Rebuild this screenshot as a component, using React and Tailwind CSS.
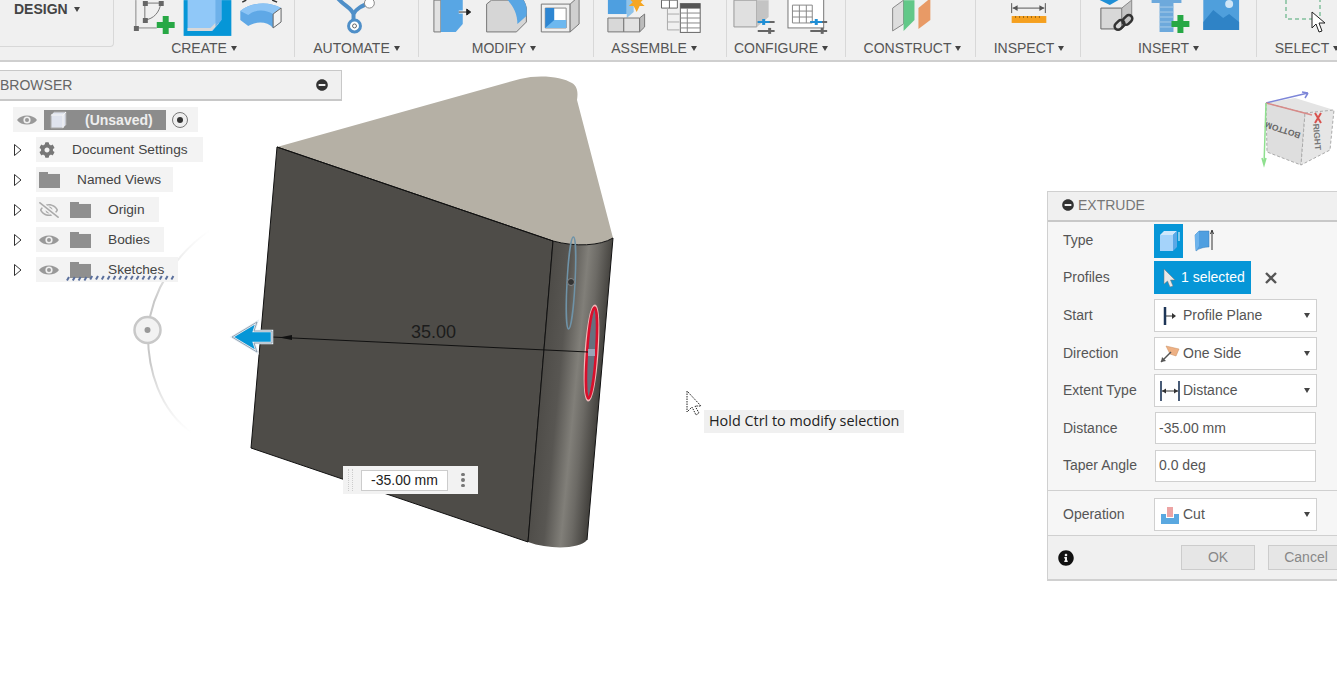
import React from 'react'
import { FaCog, FaInfoCircle, FaMinusCircle, FaRegEyeSlash } from 'react-icons/fa'

const Caret = () => (
  <svg width="6" height="5" viewBox="0 0 6 5" className="shrink-0">
    <path d="M0 0H6L3 5Z" fill="#444" />
  </svg>
)

const Group = ({ box, label, className, labelClass = '', children }) => (
  <div className={`flex h-[57px] shrink-0 flex-col border-r border-[#d8d8d8] ${className}`}>
    <svg className="h-[38px] w-full shrink-0" viewBox={box}>
      {children}
    </svg>
    <div className={`flex h-[19px] items-center justify-center gap-[4px] pt-[2px] text-[14px] text-[#555] ${labelClass}`}>
      {label}
      <Caret />
    </div>
  </div>
)

const Plus = ({ x, y }) => (
  <path d={`M${x - 3} ${y - 9}h6v6h6v6h-6v6h-6v-6h-6v-6h6z`} fill="#27a845" />
)

const Sliders = ({ x, y }) => (
  <g>
    <path d={`M${x} ${y}h17M${x} ${y + 9}h17`} stroke="#666" strokeWidth="2" />
    <path d={`M${x + 6} ${y - 3}v6`} stroke="#1f8fd6" strokeWidth="3" />
    <path d={`M${x + 12} ${y + 6}v6`} stroke="#666" strokeWidth="3" />
    <path d={`M${x} ${y}h12`} stroke="#1f8fd6" strokeWidth="2" />
  </g>
)

const Toolbar = () => (
  <div className="relative flex h-[62px] border-b-2 border-[#cfcfcf] bg-[#f0f0f0]">
    <div className="h-[47px] w-[114px] shrink-0 rounded-br-[4px] border-r border-b border-[#d8d8d8] pl-[14px]">
      <div className="flex h-[18px] items-center gap-[6px] text-[14px] font-bold text-[#444]">
        DESIGN
        <Caret />
      </div>
    </div>
    <Group box="114 0 181 38" label="CREATE" className="w-[181px]">
      <path d="M136 0V28H157" fill="none" stroke="#888" strokeWidth="1" />
      <path d="M145 3H161M145 3V20M145 20C154 19 160 12 161 3" fill="none" stroke="#777" strokeWidth="1" />
      <path d="M134 26h5v5h-5zM143 1h5v5h-5zM159 1h5v5h-5zM143 18h5v5h-5z" fill="#666" />
      <Plus x={166} y={25} />
      <rect x="184" y="0" width="48" height="36" fill="#0696d7" />
      <path d="M188 0H222V20L213 31H188Z" fill="#90c8f8" />
      <path d="M188 28H211L219 20V24L212 31H188Z" fill="#d8d8d8" />
      <path d="M216 0H222V20L216 27Z" fill="#6db1ea" />
      <path d="M241 11C252 2 270 1 282 8V22L274 28C268 21 257 21 249 26L241 20Z" fill="#5fa8e6" />
      <path d="M241 11C252 2 270 1 282 8L274 14C266 9 256 9 249 15Z" fill="#8cc4f5" />
      <path d="M274 14L282 8V22L274 28Z" fill="#f2f2f2" stroke="#666" />
      <path d="M243 2L247 0M273 0L278 2" stroke="#333" strokeWidth="1.5" />
    </Group>
    <Group box="295 0 124 38" label="AUTOMATE" className="w-[124px]">
      <path d="M338 -2C345 6 352 8 354 14V24M372 2C362 6 357 8 354 14" fill="none" stroke="#4f8fc8" strokeWidth="4" />
      <circle cx="355" cy="26" r="6" fill="#fff" stroke="#4f8fc8" strokeWidth="3" />
      <circle cx="355" cy="26" r="2" fill="none" stroke="#666" />
      <circle cx="370" cy="3" r="5" fill="#fff" stroke="#888" />
    </Group>
    <Group box="419 0 175 38" label="MODIFY" className="w-[175px]" labelClass="pr-[4px]">
      <path d="M434 0H441V32H434Z" fill="#e2e2e2" stroke="#777" />
      <path d="M441 0H463V24L456 32H441Z" fill="#58a6e4" />
      <path d="M459 12H470" stroke="#fff" strokeWidth="3" />
      <path d="M459 12H470M467 9L471 12L467 15Z" stroke="#222" fill="#222" />
      <path d="M487 4V32H517L527 22V8C526 4 525 2 524 0H492Z" fill="#d6d6d6" stroke="#777" />
      <path d="M508 0H524C527 4 528 9 527 16L518 24C518 14 514 6 508 0Z" fill="#58a6e4" />
      <path d="M542 4H571V32H542Z" fill="#f0f0f0" stroke="#777" />
      <path d="M571 4L580 -4V24L571 32Z" fill="#cfcfcf" stroke="#777" />
      <path d="M546 8H567V28H546Z" fill="#fff" stroke="#888" />
      <path d="M546 8H555V20H567V28H546Z" fill="#2e86d2" />
      <path d="M555 20H567V28H546Z" fill="#6db8ef" />
    </Group>
    <Group box="594 0 133 38" label="ASSEMBLE" className="w-[133px]" labelClass="pr-[12px]">
      <path d="M608 -2H627V14H608Z" fill="#4e9fe0" />
      <path d="M627 -2L634 -6V12L627 18Z" fill="#8fc3ea" />
      <path d="M608 18H624V32H608Z" fill="#d8d8d8" stroke="#777" />
      <path d="M624 18H640V32H624Z" fill="#e2e2e2" stroke="#777" />
      <path d="M640 32L645 27V14L640 18Z" fill="#bbb" stroke="#777" />
      <path d="M637 -6L639 -2L646 -3L641 2L645 6L640 6L637 12L634 6L629 6L633 2L628 -3L635 -2Z" fill="#f5a623" />
      <path d="M662 0H678V8H662Z" fill="#fff" stroke="#666" />
      <path d="M670 0V8" stroke="#666" />
      <path d="M668 8V30M668 14H680M668 22H680M668 30H680" stroke="#aaa" fill="none" />
      <rect x="681" y="3.5" width="20" height="29" fill="#fff" stroke="#666" />
      <rect x="681" y="3.5" width="20" height="5" fill="#555" />
      <path d="M681 13H701M681 18H701M681 23H701M681 28H701M688 8V32" stroke="#888" />
    </Group>
    <Group box="727 0 119 38" label="CONFIGURE" className="w-[119px]" labelClass="pr-[10px]">
      <path d="M734 0V27H757V0Z" fill="#e0e0e0" stroke="#999" />
      <path d="M757 0H769V17L757 27Z" fill="#c4c4c4" />
      <Sliders x={758} y={22} />
      <rect x="788.5" y="-2" width="36" height="30" fill="#fff" stroke="#777" />
      <path d="M793 5H813V23H793ZM793 11H813M793 17H813M800 5V23M807 5V23" fill="none" stroke="#888" />
      <Sliders x={811} y={22} />
    </Group>
    <Group box="846 0 130 38" label="CONSTRUCT" className="w-[130px]" labelClass="pl-[4px]">
      <path d="M893 8L904 0V24L893 31Z" fill="#ddd" stroke="#888" />
      <path d="M904 0H915V20L904 31Z" fill="#62c888" />
      <path d="M919 29V8L931 -2V20Z" fill="#e89a66" />
    </Group>
    <Group box="976 0 105 38" label="INSPECT" className="w-[105px]" labelClass="pl-[2px]">
      <path d="M1012 3V13M1046 3V13M1013 8H1045" stroke="#555" fill="none" />
      <path d="M1013 8L1018 5V11ZM1045 8L1040 5V11Z" fill="#555" />
      <rect x="1012" y="16" width="35" height="7" fill="#f5a01f" />
      <path d="M1016 16v2M1020 16v2M1024 16v2M1028 16v2M1032 16v2M1036 16v2M1040 16v2" stroke="#9a6510" />
    </Group>
    <Group box="1081 0 176 38" label="INSERT" className="w-[176px]">
      <path d="M1101 8H1122V29H1101Z" fill="#d8d8d8" stroke="#666" />
      <path d="M1122 8L1132 0V20L1122 29Z" fill="#c4c4c4" stroke="#888" />
      <path d="M1096 -2L1110 5L1122 -2Z" fill="#1f8fd6" />
      <g fill="none" stroke="#333" strokeWidth="2.5">
        <rect x="1114" y="22" width="11" height="7" rx="3.5" transform="rotate(-45 1119 25)" />
        <rect x="1122" y="17" width="11" height="7" rx="3.5" transform="rotate(-45 1127 20)" />
      </g>
      <path d="M1152 0H1182V3H1174V32H1160V3H1152Z" fill="#6da9dc" />
      <path d="M1160 7H1174M1160 12H1174M1160 17H1174M1160 22H1174M1160 27H1174" stroke="#a8cde9" />
      <Plus x={1181} y={24} />
      <rect x="1204" y="-2" width="36" height="32" fill="#4f9fdc" />
      <circle cx="1230" cy="4" r="4" fill="#cfe6f7" />
      <path d="M1204 22L1214 10L1224 18L1230 14L1240 22V30H1204Z" fill="#2f83c6" />
    </Group>
    <Group box="1257 0 100 38" label="SELECT" className="w-[100px] border-r-0">
      <path d="M1286 0V19H1320V0" fill="none" stroke="#4aa772" strokeDasharray="4 3" />
      <path d="M1312 12V28L1316 24L1319 32L1322 31L1319 23H1325Z" fill="#fff" stroke="#222" />
    </Group>
  </div>
)

const Eye = () => (
  <svg width="20" height="12" viewBox="0 0 20 12" className="shrink-0">
    <path d="M0 6C4 0 16 0 20 6C16 12 4 12 0 6Z" fill="#999" />
    <circle cx="10" cy="6" r="3.6" fill="#f0f0f0" />
    <circle cx="10" cy="6" r="2" fill="#999" />
  </svg>
)

const Folder = () => (
  <svg width="21" height="16" viewBox="0 0 21 16" className="shrink-0">
    <path d="M0 0H9V2H21V16H0Z" fill="#8f8f8f" />
    <path d="M9 1H21V2H9Z" fill="#f0f0f0" />
  </svg>
)

const Toggle = () => (
  <svg width="8" height="12" viewBox="0 0 8 12" className="ml-[14px] mr-[14px] shrink-0">
    <path d="M0.5 0.5L7 6L0.5 11.5Z" fill="#fff" stroke="#333" />
  </svg>
)

const TreeRow = ({ width, children }) => (
  <div className="flex h-[25px] items-center">
    <Toggle />
    <div className={`flex h-[25px] items-center bg-[#f3f3f3] text-[13.7px] text-[#444] ${width}`}>{children}</div>
  </div>
)

const Browser = () => (
  <div className="relative mt-[8px] w-[342px]">
    <div className="flex h-[31px] items-center justify-between border-t border-r border-b-2 border-[#c8c8c8] bg-[#f0f0f0] pr-[13px] text-[14px] text-[#666]">
      BROWSER
      <FaMinusCircle className="text-[12px] text-[#333]" />
    </div>
    <div className="mt-[6px] flex flex-col gap-[5px]">
      <div className="ml-[13px] flex h-[25px] w-[185px] items-center bg-[#f3f3f3]">
        <div className="ml-[4px]">
          <Eye />
        </div>
        <div className="ml-[7px] flex h-[20px] w-[122px] items-center bg-[#8c8c8c]">
          <svg width="18" height="18" viewBox="0 0 18 18" className="ml-[5px] shrink-0">
            <path d="M2 4L5 1H17V14L14 17H2Z" fill="#dfe3ee" stroke="#aaa" />
            <path d="M14 4V17M14 4H2M14 4L17 1" stroke="#f5f5f5" fill="none" />
          </svg>
          <span className="ml-[18px] pt-[2px] text-[14px] font-bold text-[#eee]">(Unsaved)</span>
        </div>
        <div className="ml-[6px] flex h-[16px] w-[16px] items-center justify-center rounded-full border border-[#777] bg-[#eee]">
          <div className="h-[6px] w-[6px] rounded-full bg-[#333]" />
        </div>
      </div>
      <TreeRow width="w-[167px]">
        <FaCog className="ml-[3px] text-[16px] text-[#777]" />
        <span className="ml-[17px] pt-[2px]">Document Settings</span>
      </TreeRow>
      <TreeRow width="w-[137px]">
        <div className="ml-[3px]">
          <Folder />
        </div>
        <span className="ml-[17px] pt-[2px]">Named Views</span>
      </TreeRow>
      <TreeRow width="w-[123px]">
        <FaRegEyeSlash className="ml-[3px] text-[20px] text-[#aaa]" />
        <div className="ml-[11px]">
          <Folder />
        </div>
        <span className="ml-[17px] pt-[2px]">Origin</span>
      </TreeRow>
      <TreeRow width="w-[128px]">
        <div className="ml-[3px]">
          <Eye />
        </div>
        <div className="ml-[11px]">
          <Folder />
        </div>
        <span className="ml-[17px] pt-[2px]">Bodies</span>
      </TreeRow>
      <TreeRow width="w-[142px]">
        <div className="ml-[3px]">
          <Eye />
        </div>
        <div className="ml-[11px]">
          <Folder />
        </div>
        <span className="ml-[17px] pt-[2px]">Sketches</span>
      </TreeRow>
    </div>
    <svg className="absolute left-[66px] top-[205px]" width="112" height="6" viewBox="0 0 112 6">
      {Array.from({ length: 19 }).map((_, i) => (
        <path key={i} d={`M${1 + i * 5.8} ${i < 4 ? 5.5 : 4.5}l2 -3.5`} stroke="#5a6f9c" strokeWidth="2" />
      ))}
    </svg>
  </div>
)

const Model = () => (
  <svg className="absolute inset-0" width="1337" height="691" viewBox="0 0 1337 691">
    <defs>
      <linearGradient id="side" gradientUnits="userSpaceOnUse" x1="550" y1="241" x2="613" y2="247">
        <stop offset="0" stopColor="#4c4a46" />
        <stop offset="0.35" stopColor="#585652" />
        <stop offset="0.62" stopColor="#817f79" />
        <stop offset="0.78" stopColor="#6c6a65" />
        <stop offset="1" stopColor="#45433f" />
      </linearGradient>
      <linearGradient id="arc" x1="0" y1="0" x2="0" y2="1">
        <stop offset="0" stopColor="#ddd" stopOpacity="0" />
        <stop offset="0.35" stopColor="#c8c8c8" />
        <stop offset="0.65" stopColor="#c8c8c8" />
        <stop offset="1" stopColor="#ddd" stopOpacity="0" />
      </linearGradient>
    </defs>
    <path d="M210 230C175 255 152 290 148 330C147 370 160 410 192 433" fill="none" stroke="url(#arc)" strokeWidth="2" />
    <circle cx="147.5" cy="330" r="13" fill="#f2f2f2" stroke="#c8c8c8" strokeWidth="2.5" />
    <circle cx="147.5" cy="330" r="3" fill="#999" />
    <path d="M277 147L520 79C540 74 562 77 572 83C578 87 578 93 577 100L613 238C600 246 575 247 553 241Z" fill="#b5b0a5" />
    <path d="M277 147L553 241L528 542L251 448Z" fill="#4e4c48" stroke="#111" strokeWidth="1" />
    <path d="M553 241C575 247 600 246 613 238L587 540C580 549 550 550 528 542Z" fill="url(#side)" />
    <path d="M277 147L553 241C575 247 600 246 613 238L587 540M553 241L528 542" fill="none" stroke="#111" strokeWidth="1" />
    <ellipse cx="571" cy="283" rx="4" ry="46" transform="rotate(3 571 283)" fill="none" stroke="#6f93a8" strokeWidth="1.5" />
    <circle cx="571" cy="282" r="3.5" fill="#333" stroke="#888" />
    <ellipse cx="591.5" cy="353" rx="5.5" ry="47" transform="rotate(4 591.5 353)" fill="#66707e" stroke="#f0b8b8" strokeWidth="3" />
    <ellipse cx="591.5" cy="353" rx="4.5" ry="45.5" transform="rotate(4 591.5 353)" fill="none" stroke="#d8102c" strokeWidth="2.5" />
    <rect x="588" y="349" width="7" height="7" fill="#9aa5b8" />
    <path d="M272 337L588 352" stroke="#111" strokeWidth="1" />
    <path d="M279 337.5L292 335V340Z" fill="#111" />
    <text x="411" y="338" fontSize="18" fill="#1c1c1c">35.00</text>
    <path d="M232 337L257 322L254 331H272V343H254L257 352Z" fill="#0696d7" stroke="#e8eef4" strokeWidth="2.5" />
    <path d="M232 337L257 322L254 331H272V343H254L257 352Z" fill="none" stroke="#7f93a6" strokeWidth="0.8" />
    <path d="M687 391V412L692 407L696 415L699 413L695 406H701Z" fill="#fff" stroke="#222" strokeDasharray="1.5 1" />
  </svg>
)

const ViewCube = () => (
  <svg className="absolute left-[1240px] top-[80px]" width="97" height="95" viewBox="1240 80 97 95">
    <path d="M1266 103L1295 98L1334 110L1305 113Z" fill="#e4e4e4" />
    <path d="M1266 103L1305 113L1301 165L1267 152Z" fill="#dedede" stroke="#aaa" strokeDasharray="3 2" />
    <path d="M1305 113L1334 110L1330 150L1301 165Z" fill="#e6e6e6" stroke="#aaa" strokeDasharray="3 2" />
    <text x="0" y="0" fontSize="8.5" fill="#666" fontWeight="bold" transform="translate(1301 133) rotate(198)">BOTTOM</text>
    <text x="0" y="0" fontSize="8.5" fill="#777" fontWeight="bold" transform="translate(1313 124) rotate(85)">RIGHT</text>
    <path d="M1266 103L1308 93M1308 93L1302 92M1308 93L1305 98" fill="none" stroke="#7d86d8" strokeWidth="1.5" />
    <path d="M1266 103L1312 115" stroke="#d88a88" strokeWidth="1.5" />
    <path d="M1315 113L1321 123M1321 113L1315 123" stroke="#d9524e" strokeWidth="2" />
    <path d="M1266 103L1264 165M1262 158L1264 165L1266 158" fill="none" stroke="#8fe08f" strokeWidth="1.5" />
  </svg>
)

const Select = ({ icon, label }) => (
  <div className="flex h-[33px] w-[163px] items-center justify-between border border-[#d0d0d0] bg-white pr-[6px] pl-[5px]">
    <div className="flex items-center gap-[3px]">
      <div className="flex h-[22px] w-[20px] items-center justify-center">{icon}</div>
      <span>{label}</span>
    </div>
    <Caret />
  </div>
)

const Row = ({ label, className = 'h-[37.5px]', children }) => (
  <div className={`flex items-center ${className}`}>
    <span className="w-[106px] shrink-0 pl-[15px]">{label}</span>
    {children}
  </div>
)

const Field = ({ value }) => (
  <div className="ml-px flex h-[32px] w-[161px] items-center border border-[#d0d0d0] bg-white pl-[3px]">{value}</div>
)

const Extrude = () => (
  <div className="absolute left-[1047px] top-[191px] w-[300px] border-t border-l border-b-2 border-[#d0d0d0] bg-[#f6f6f6] text-[14px] text-[#555]">
    <div className="flex h-[30px] items-center gap-[4px] border-b-2 border-[#c8c8c8] bg-[#f0f0f0] pb-[2px] pl-[14px] text-[#777]">
      <FaMinusCircle className="text-[12px] text-[#333]" />
      EXTRUDE
    </div>
    <Row label="Type" className="h-[37px]">
      <div className="flex h-[34px] w-[29px] items-center justify-center bg-[#0696d7]">
        <svg width="22" height="24" viewBox="0 0 22 24">
          <path d="M2 6H15V22H2Z" fill="#a5d3fa" />
          <path d="M2 6L6 2H19L15 6Z" fill="#cfe7fb" />
          <path d="M15 6L19 2V18L15 22Z" fill="#5aa8e6" />
          <path d="M21 12V3" stroke="#fff" />
        </svg>
      </div>
      <svg width="22" height="24" viewBox="0 0 22 24" className="ml-[10px]">
        <path d="M2 6L6 2H16V18C12 18 6 19 3 22Z" fill="#4f9fe0" stroke="#3a7fb8" strokeWidth="0.5" />
        <path d="M3 22C2 16 2 10 2 6L6 2V17Z" fill="#6db3ec" />
        <path d="M19 21V2M17.5 5L19 1L20.5 5" stroke="#333" fill="none" />
      </svg>
    </Row>
    <Row label="Profiles" className="h-[37px]">
      <div className="flex h-[33px] w-[97px] items-center bg-[#0696d7] pl-[9px] text-white">
        <svg width="12" height="20" viewBox="0 0 12 20" className="shrink-0">
          <path d="M1 1V16L4.5 13L7 19L10 18L7.5 12H12Z" fill="#e8e8e8" stroke="#777" strokeWidth="0.5" />
        </svg>
        <span className="ml-[6px] whitespace-nowrap">1 selected</span>
      </div>
      <svg width="12" height="12" viewBox="0 0 12 12" className="ml-[14px]">
        <path d="M1 1L11 11M11 1L1 11" stroke="#555" strokeWidth="2.4" />
      </svg>
    </Row>
    <div className="pt-px">
      <Row label="Start">
        <Select
          label="Profile Plane"
          icon={
            <svg width="16" height="20" viewBox="0 0 16 20">
              <path d="M3 1V19" stroke="#1d3557" strokeWidth="2.5" />
              <path d="M4 10H11" stroke="#333" />
              <path d="M10 7L14 10L10 13Z" fill="#333" />
            </svg>
          }
        />
      </Row>
      <Row label="Direction">
        <Select
          label="One Side"
          icon={
            <svg width="20" height="20" viewBox="0 0 20 20">
              <path d="M6 3L19 6L16 13L10 11Z" fill="#eeb184" stroke="#c98d5f" strokeWidth="0.5" />
              <path d="M1 19L11 9" stroke="#555" strokeWidth="1.5" />
              <path d="M1 19L2 14L6 18Z" fill="#555" />
            </svg>
          }
        />
      </Row>
      <Row label="Extent Type">
        <Select
          label="Distance"
          icon={
            <svg width="20" height="20" viewBox="0 0 20 20">
              <path d="M1 0V20M19 0V20" stroke="#1d3557" strokeWidth="1.6" />
              <path d="M2 10H18" stroke="#333" />
              <path d="M2 10L6 7.5V12.5ZM18 10L14 7.5V12.5Z" fill="#333" />
            </svg>
          }
        />
      </Row>
      <Row label="Distance">
        <Field value="-35.00 mm" />
      </Row>
      <Row label="Taper Angle">
        <Field value="0.0 deg" />
      </Row>
    </div>
    <div className="mt-[5px] border-t border-[#d0d0d0]">
      <Row label="Operation" className="h-[44px] pt-[4px]">
        <Select
          label="Cut"
          icon={
            <svg width="18" height="18" viewBox="0 0 18 18">
              <path d="M6 1H12V11H6Z" fill="#eda4a4" />
              <path d="M0 8H5V12H13V8H18V18H0Z" fill="#5aa8e0" />
            </svg>
          }
        />
      </Row>
    </div>
    <div className="flex h-[44px] items-center border-t border-[#d0d0d0] bg-[#f0f0f0] pt-px pl-[10px]">
      <FaInfoCircle className="text-[16px] text-[#111]" />
      <div className="ml-[107px] flex h-[25px] w-[74px] items-center justify-center border border-[#ccc] bg-[#e6e6e6] text-[#888]">OK</div>
      <div className="ml-[13px] flex h-[25px] w-[76px] items-center justify-center border border-[#ccc] bg-[#e6e6e6] text-[#888]">Cancel</div>
    </div>
  </div>
)

const DimInput = () => (
  <div className="absolute left-[343px] top-[466px] flex h-[28px] w-[135px] items-center bg-[#f2f2f2] text-[14px] text-[#222]">
    <div className="ml-[5px] h-[22px] w-[5px] border-x border-dotted border-[#ccc]" />
    <div className="ml-[8px] flex h-[21px] w-[87px] items-center justify-center border border-[#ccc] bg-white">-35.00 mm</div>
    <div className="ml-[13px] flex flex-col gap-[2px]">
      <div className="h-[3.5px] w-[3.5px] rounded-full bg-[#777]" />
      <div className="h-[3.5px] w-[3.5px] rounded-full bg-[#777]" />
      <div className="h-[3.5px] w-[3.5px] rounded-full bg-[#777]" />
    </div>
  </div>
)

export default function App() {
  return (
    <div className="relative h-[691px] overflow-hidden bg-white font-['Liberation_Sans',Arial,sans-serif]">
      <Model />
      <Toolbar />
      <Browser />
      <ViewCube />
      <Extrude />
      <DimInput />
      <div className="absolute left-[704px] top-[410px] flex h-[23px] w-[200px] items-center bg-[#f0f0f0] pb-[2px] pl-[5px] font-['Open_Sans',sans-serif] text-[14.4px] whitespace-nowrap text-[#222]">
        Hold Ctrl to modify selection
      </div>
    </div>
  )
}
